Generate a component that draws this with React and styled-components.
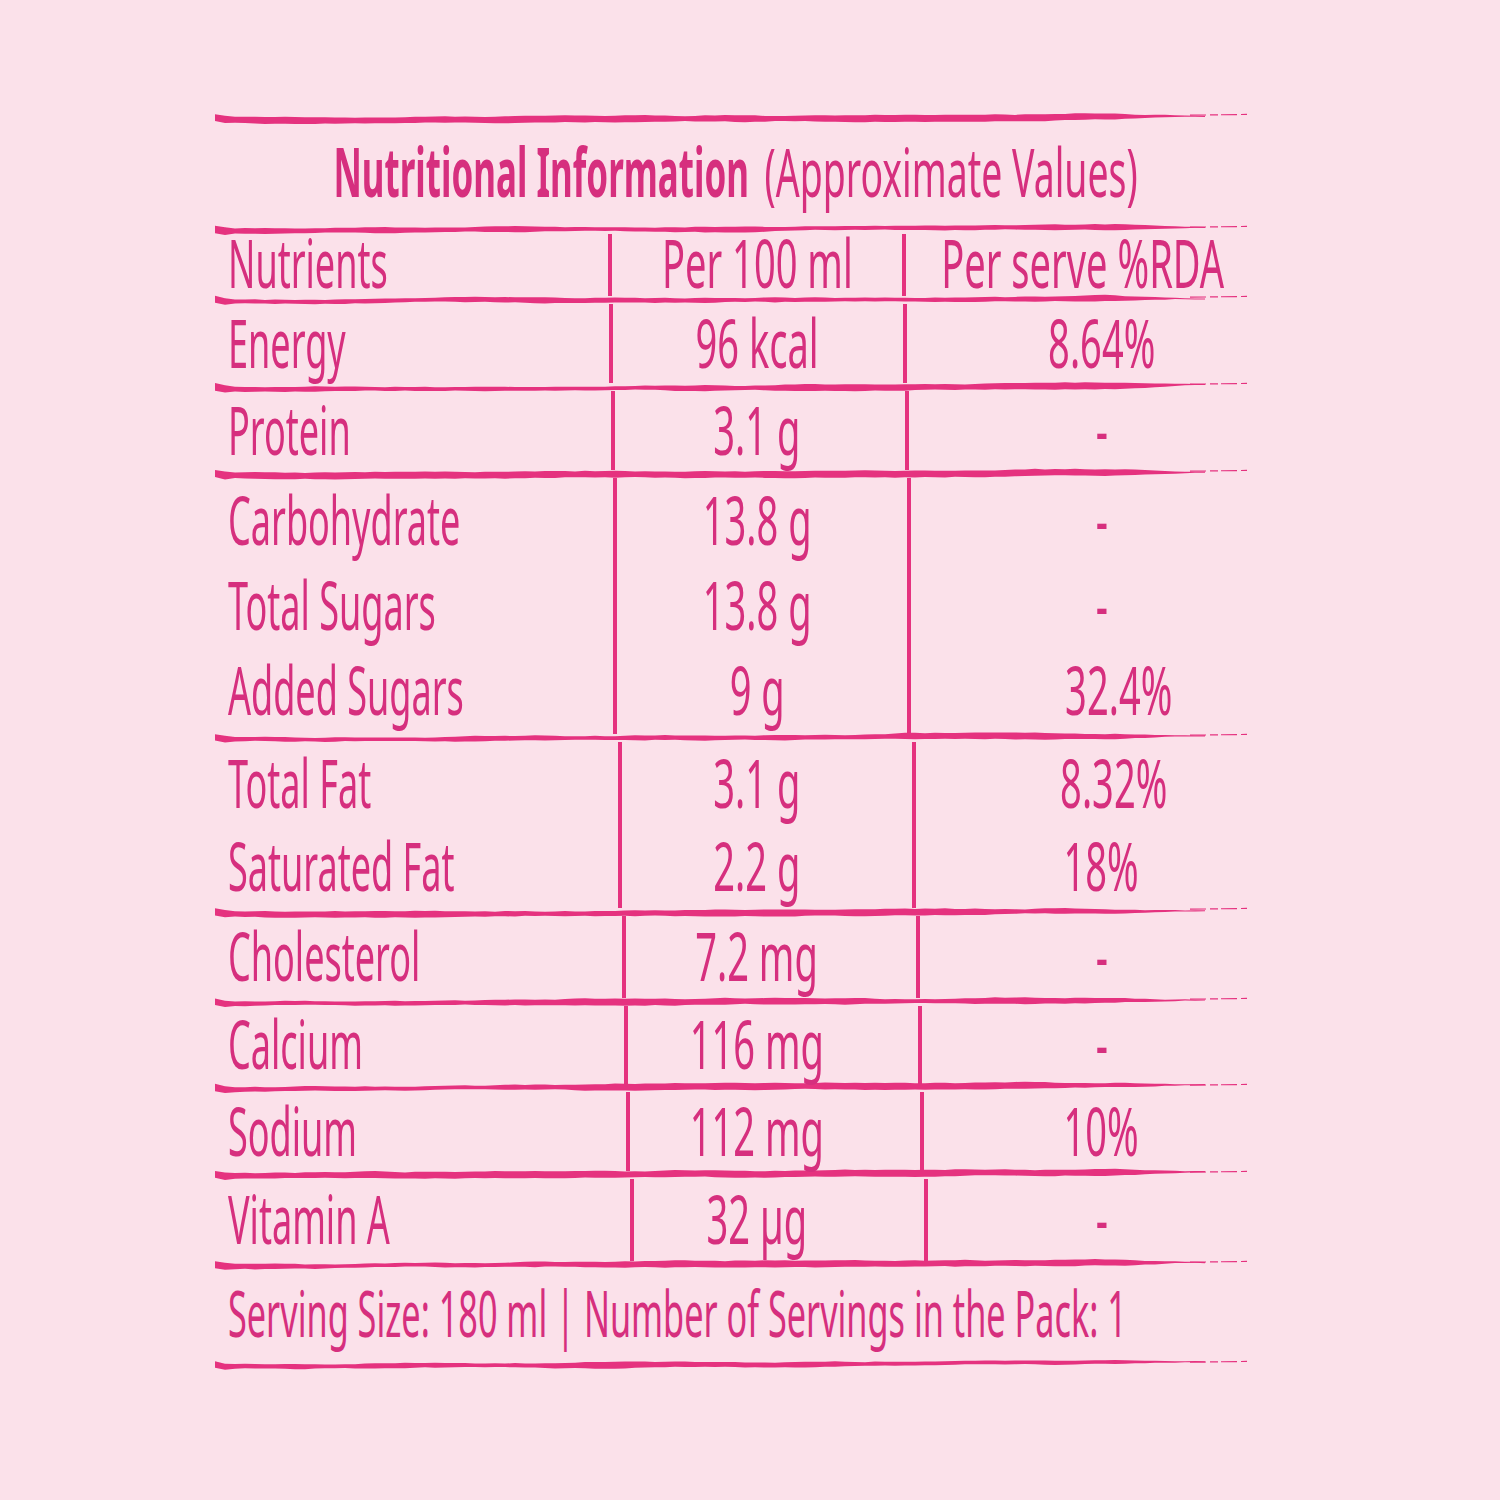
import React from "react";
import styled, { createGlobalStyle } from "styled-components";

const INK = "#d62f7e";
const LINE = "#e5327f";

const GlobalStyle = createGlobalStyle`
  *, *::before, *::after {
    box-sizing: border-box;
  }
  html, body {
    margin: 0;
    padding: 0;
    background: #fbe1ea;
  }
  body {
    width: 1500px;
    min-height: 1500px;
    overflow: hidden;
    font-family: "Noto Sans", "DejaVu Sans", sans-serif;
  }
`;

const Page = styled.div`
  width: 1500px;
  height: 1500px;
  padding: 114px 0 0 215px;
`;

const Table = styled.div`
  width: 1032px;
  display: flex;
  flex-direction: column;
`;

const RuleSvg = styled.svg`
  display: block;
  width: 1032px;
  height: 8px;
  overflow: visible;
`;

/* condensed face: no condensed font is installed, so the glyphs are narrowed */
const Squeeze = styled.span`
  display: inline-block;
  white-space: nowrap;
  line-height: 56px;
  transform: scaleX(${(p) => p.$x || 0.56});
  transform-origin: ${(p) => (p.$left ? "left center" : "center center")};
`;

const Title = styled.div`
  height: 104px;
  display: flex;
  align-items: center;
  justify-content: center;
  gap: 14px;
  padding: 0 0 6px 8px;
  color: ${INK};
  font-size: 68px;
`;

const TitleWord = styled(Squeeze)`
  font-weight: ${(p) => (p.$bold ? 700 : 400)};
  margin: 0 ${(p) => -p.$trim}px;
`;

const Group = styled.div`
  display: grid;
  grid-template-columns: ${(p) => 393 + p.$shift}px 294px minmax(0, 1fr);
  grid-template-rows: repeat(${(p) => p.$rows}, 1fr);
  height: ${(p) => p.$h}px;
`;

const Cell = styled.div`
  min-width: 0;
  display: flex;
  align-items: center;
  justify-content: ${(p) => (p.$left ? "flex-start" : "center")};
  padding: 0 ${(p) => p.$padR || 0}px ${(p) => (p.$head ? 6 : 4)}px ${(p) => p.$pad || 0}px;
  border-left: ${(p) => (p.$divider ? `4px solid ${LINE}` : "none")};
  color: ${INK};
  font-size: 68px;
  font-weight: 400;
`;

const Footer = styled.div`
  height: 92px;
  display: flex;
  align-items: center;
  padding: 0 0 4px 13px;
  color: ${INK};
  font-size: 64px;
  font-weight: 400;
`;

function strokePath(seed, w) {
  let s = (seed * 7919 + 104729) % 233280;
  const rnd = () => {
    s = (s * 9301 + 49297) % 233280;
    return s / 233280;
  };
  const top = [];
  const bot = [];
  let off = 0;
  let th = 5;
  for (let x = 0; x <= w; x += 10) {
    off += (rnd() - 0.5) * 0.7;
    off = Math.max(-1.4, Math.min(1.4, off));
    th += (rnd() - 0.5) * 1.6;
    th = Math.max(3.6, Math.min(7, th));
    let t = th;
    if (x > w - 90) t = Math.max(1.1, (th * (w - x)) / 90);
    if (x < 14) t = th + 2;
    const tilt = 1.6 - (3.6 * x) / w;
    const cy = 4 + off + tilt + (x < 10 ? -2 : 0);
    top.push([x, cy - t / 2]);
    bot.push([x, cy + t / 2]);
  }
  const pts = [...top, ...bot.reverse()];
  return "M" + pts.map(([x, y]) => `${x.toFixed(1)},${y.toFixed(2)}`).join(" L") + " Z";
}

const Rule = ({ seed }) => (
  <RuleSvg viewBox="0 0 1032 8" preserveAspectRatio="none">
    <path d={strokePath(seed, 990)} fill={LINE} />
    <path d="M975,1.2 L1032,0.4" stroke={LINE} strokeWidth="1.2" strokeDasharray="16 4 8 3" />
  </RuleSvg>
);

// [name, per 100 ml, % RDA, nudge of the RDA figure]
const groups = [
  { shift: 1, h: 79, rows: [["Energy", "96 kcal", "8.64%", 0]] },
  { shift: 3, h: 79, rows: [["Protein", "3.1 g", "-", 0]] },
  {
    shift: 5,
    h: 256,
    rows: [
      ["Carbohydrate", "13.8 g", "-", 0],
      ["Total Sugars", "13.8 g", "-", 0],
      ["Added Sugars", "9 g", "32.4%", 17],
    ],
  },
  {
    shift: 10,
    h: 166,
    rows: [
      ["Total Fat", "3.1 g", "8.32%", 12],
      ["Saturated Fat", "2.2 g", "18%", 0],
    ],
  },
  { shift: 14, h: 82, rows: [["Cholesterol", "7.2 mg", "-", 0]] },
  { shift: 16, h: 78, rows: [["Calcium", "116 mg", "-", 0]] },
  { shift: 18, h: 79, rows: [["Sodium", "112 mg", "10%", 0]] },
  { shift: 22, h: 82, rows: [["Vitamin A", "32 µg", "-", 0]] },
];

export default function App() {
  return (
    <Page>
      <GlobalStyle />
      <Table>
        <Rule seed={1} />
        <Title>
          <TitleWord $bold $x={0.514} $trim={195}>
            Nutritional Information
          </TitleWord>
          <TitleWord $x={0.55} $trim={152}>
            (Approximate Values)
          </TitleWord>
        </Title>
        <Rule seed={2} />
        <Group $shift={0} $rows={1} $h={62}>
          <Cell $head $left $pad={13}>
            <Squeeze $left $x={0.53}>Nutrients</Squeeze>
          </Cell>
          <Cell $head $divider>
            <Squeeze>Per 100 ml</Squeeze>
          </Cell>
          <Cell $head $divider $pad={12}>
            <Squeeze>Per serve %RDA</Squeeze>
          </Cell>
        </Group>
        {groups.map((g, gi) => (
          <React.Fragment key={gi}>
            <Rule seed={gi + 3} />
            <Group $shift={g.shift} $rows={g.rows.length} $h={g.h}>
              {g.rows.map(([name, per100, rda, nudge]) => (
                <React.Fragment key={name}>
                  <Cell $left $pad={13}>
                    <Squeeze $left $x={0.53}>{name}</Squeeze>
                  </Cell>
                  <Cell $divider $padR={g.shift * 2}>
                    <Squeeze>{per100}</Squeeze>
                  </Cell>
                  <Cell $divider $pad={50 - g.shift + nudge * 2}>
                    <Squeeze>{rda}</Squeeze>
                  </Cell>
                </React.Fragment>
              ))}
            </Group>
          </React.Fragment>
        ))}
        <Rule seed={12} />
        <Footer>
          <Squeeze $left $x={0.535}>
            Serving Size: 180 ml | Number of Servings in the Pack: 1
          </Squeeze>
        </Footer>
        <Rule seed={13} />
      </Table>
    </Page>
  );
}
